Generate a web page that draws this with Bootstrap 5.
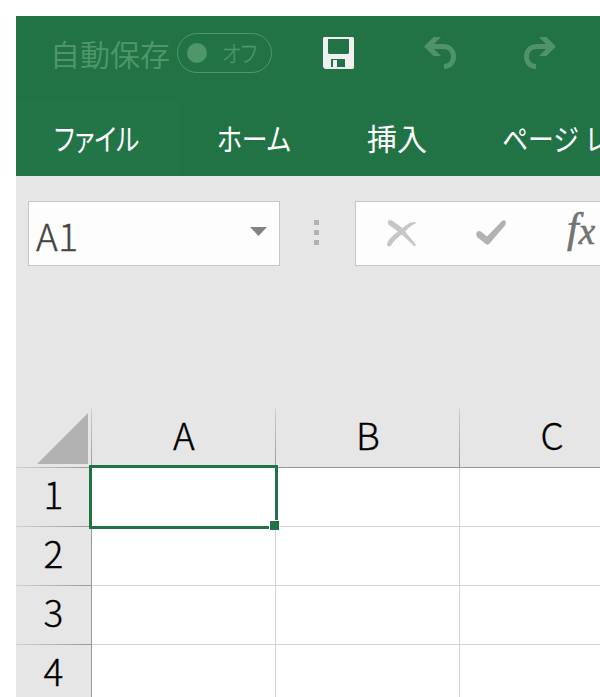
<!DOCTYPE html>
<html lang="ja">
<head>
<meta charset="utf-8">
<meta name="viewport" content="width=device-width, initial-scale=1">
<title>Excel</title>
<link href="https://cdn.jsdelivr.net/npm/bootstrap@5.3.0/dist/css/bootstrap.min.css" rel="stylesheet">
<style>
  html, body { overflow: hidden; background: #fff; }
  body { font-family: "Noto Sans CJK JP", sans-serif; color: #000; padding: 16px 0 0 16px; height: 697px; }
  .app { height: 681px; width: 584px; background: #e6e6e6; }
  .titlebar { height: 85px; background: #217346; padding: 0 0 11px 34px; }
  .autosave { width: 127px; font-size: 30px; line-height: 60px; font-weight: 350; color: #4f976b; }
  .switch { width: 95px; height: 40px; border: 1px solid #4f976b; border-radius: 20px; padding-left: 9px; color: #4f976b; }
  .knob { width: 20px; height: 20px; background: #4f976b; }
  .switch-text { font-size: 23px; line-height: 36px; padding-bottom: 2px; font-weight: 300; font-feature-settings: "palt"; margin-left: 15px; transform: scaleX(.87); transform-origin: 0 50%; -webkit-text-stroke: .3px; }
  .save { margin-left: 51px; }
  .undo { margin-left: 70px; }
  .redo { margin-left: 68px; }
  .tabs { height: 75px; background: #217346; color: #fff; font-size: 30px; line-height: 73px; }
  .tab { font-feature-settings: "palt"; }
  .tab span { display: inline-block; transform: scaleX(.86); transform-origin: 0 50%; }
  .tab-file { width: 163px; padding-left: 38px; background: #227547; }
  .tab-file span { transform: scaleX(.82); }
  .tab-home { width: 171px; padding-left: 38px; }
  .tab-insert { width: 137px; padding-left: 17px; }
  .tab-insert span { transform: none; }
  .tab-page { padding-left: 15px; }
  .tab-page span { word-spacing: 2px; }
  .formula { height: 233px; padding: 25px 0 0 12px; }
  .field { height: 65px; background: #fdfdfd; border: 1px solid #c6c6c6; }
  .formula-field { width: 300px; padding-left: 31px; }
  .namebox { width: 252px; padding: 0 12px 0 7px; font-size: 37px; font-weight: 300; color: #444; -webkit-text-stroke: .35px; }
  .namebox span { line-height: 63px; padding-top: 4px; letter-spacing: .5px; }
  .namebox svg { margin-top: -5px; }
  .grip { width: 5px; margin: 19px 36px 0 34px; gap: 5px; }
  .grip i { width: 5px; height: 5px; background: #b2b2b2; }
  .cancel { margin-top: 18px; }
  .enter { margin: 18px 61px 0 60px; }
  .fx { font: italic 42px/52px "Liberation Serif", serif; color: #737373; -webkit-text-stroke: .6px #737373; }
  .fx sub { font-size: 37px; line-height: 0; bottom: -2px; }
  .sheet { display: grid; grid-template-columns: 76px 184px 184px 184px; grid-auto-rows: 59px; font-size: 37px; font-weight: 300; -webkit-text-stroke: .35px; line-height: 51px; text-align: center; }
  .colhead { background: linear-gradient(#d0d0d0, #999) right / 1px 100% no-repeat; border-bottom: 1px solid #999; }
  .corner { background: linear-gradient(#d0d0d0, #999) right / 1px 100% no-repeat, linear-gradient(90deg, #d0d0d0, #999) bottom / 100% 1px no-repeat; padding: 4px 0 0 21px; line-height: 0; text-align: left; }
  .rowhead { height: 59px; border-right: 1px solid #999; background: linear-gradient(90deg, #d0d0d0, #999) bottom / 100% 1px no-repeat; }
  .cell { background: #fff; border-right: 1px solid #d4d4d4; border-bottom: 1px solid #d4d4d4; }
  .selection { top: -3px; left: -3px; width: 189px; height: 64px; border: 3px solid #217346; }
  .handle { right: -5px; bottom: -5px; width: 11px; height: 11px; border: 1px solid #fff; background: #217346; }
</style>
<script src="https://cdn.jsdelivr.net/npm/bootstrap@5.3.0/dist/js/bootstrap.bundle.min.js"></script>
</head>
<body>
<div class="app overflow-hidden">
  <header class="titlebar d-flex align-items-center">
    <span class="autosave text-nowrap">自動保存</span>
    <div class="switch d-flex align-items-center flex-shrink-0"><i class="knob rounded-circle"></i><span class="switch-text">オフ</span></div>
    <svg class="save flex-shrink-0" width="31" height="32" viewBox="0 0 31 32"><path fill="#f0f0f0" fill-rule="evenodd" d="M1 0H30L31 1V31L30 32H2L0 30V1ZM5 2V16L6 17H25L26 16V2ZM8 22V30H10V23H14V30H22V22Z"/></svg>
    <svg class="undo flex-shrink-0" width="32" height="32" viewBox="0 0 32 32"><path fill="#4f926c" d="M0 9.500L9.500 0H17L10 7H19C27 7 32 12.500 32 19.500C32 27 27 32 20 32V27C24 27 27 24 27 19.500C27 15 24 12 19 12H10L17 19H9.500Z"/></svg>
    <svg class="redo flex-shrink-0" width="32" height="32" viewBox="0 0 32 32"><path fill="#4f926c" d="M32 9.500L22.500 0H15L22 7H13C5 7 0 12.500 0 19.500C0 27 5 32 12 32V27C8 27 5 24 5 19.500C5 15 8 12 13 12H22L15 19H22.500Z"/></svg>
  </header>
  <nav class="tabs d-flex text-nowrap">
    <div class="tab tab-file flex-shrink-0"><span>ファイル</span></div>
    <div class="tab tab-home flex-shrink-0"><span>ホーム</span></div>
    <div class="tab tab-insert flex-shrink-0"><span>挿入</span></div>
    <div class="tab tab-page flex-shrink-0"><span>ページ レ</span></div>
  </nav>
  <section class="formula d-flex align-items-start">
    <div class="field namebox d-flex align-items-center justify-content-between flex-shrink-0">
      <span>A1</span>
      <svg width="17" height="9" viewBox="0 0 17 9"><path fill="#808486" d="M0 0H17L8.500 9Z"/></svg>
    </div>
    <div class="grip d-flex flex-column flex-shrink-0"><i></i><i></i><i></i></div>
    <div class="field formula-field d-flex align-items-start flex-shrink-0">
      <svg class="cancel" width="29" height="27" viewBox="0 0 29 27"><path fill="#c6c6c6" d="M1 1C3 0 5 0 7 2L15.500 8C19 5 23 2 28 2L29 3C25 5 21 8 18 11.500C22 16 26 21 29 25L27.500 26.500C23 22 19 18 14.500 14.500C10 18 6 22 4 25.500C3 27 0 27 0 24C1 20 6 15 11 11.500L2 5Q0 3 1 1Z"/></svg>
      <svg class="enter" width="30" height="25" viewBox="0 0 30 25"><path fill="#b2b2b2" d="M1 12Q3 10 5.500 12L11 16.500L26 1Q28 -.5 29.500 1Q30.500 3 29 5.500L13.500 23.500Q12 25.500 10 24L1 17Q-.5 14 1 12Z"/></svg>
      <span class="fx">f<sub>x</sub></span>
    </div>
  </section>
  <main class="sheet">
    <div class="corner"><svg width="51" height="51" viewBox="0 0 51 51"><path fill="#b2b2b2" d="M51 0V51H0Z"/></svg></div>
    <div class="colhead">A</div><div class="colhead">B</div><div class="colhead">C</div>
    <div class="rowhead">1</div><div class="cell position-relative"><div class="selection position-absolute"><div class="handle position-absolute"></div></div></div><div class="cell"></div><div class="cell"></div>
    <div class="rowhead">2</div><div class="cell"></div><div class="cell"></div><div class="cell"></div>
    <div class="rowhead">3</div><div class="cell"></div><div class="cell"></div><div class="cell"></div>
    <div class="rowhead">4</div><div class="cell"></div><div class="cell"></div><div class="cell"></div>
  </main>
</div>
</body>
</html>
